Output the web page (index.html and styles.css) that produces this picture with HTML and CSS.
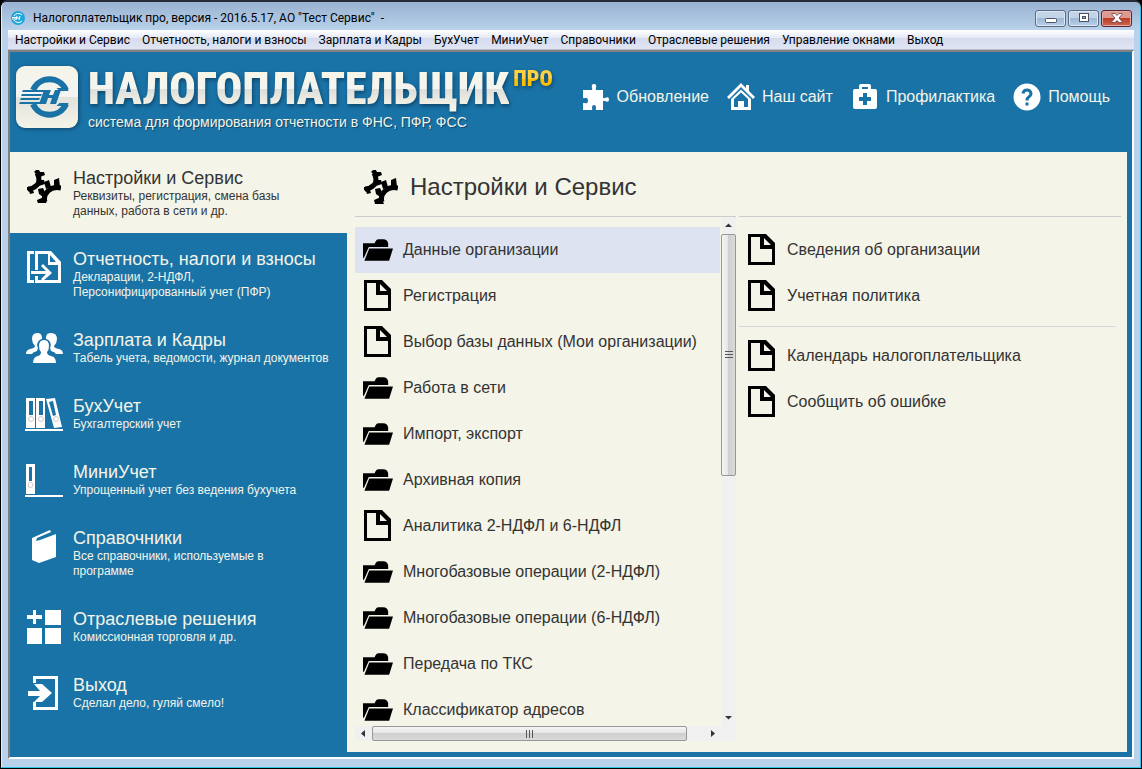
FILE: index.html
```html
<!DOCTYPE html>
<html lang="ru">
<head>
<meta charset="utf-8">
<title>Налогоплательщик про</title>
<link rel="stylesheet" href="styles.css">
</head>
<body>
<svg class="defs" aria-hidden="true">
  <defs>
    <symbol id="tools" viewBox="0 0 34 34">
      <path d="M10 3q4 8 0 12-4 4-9 4" fill="none" stroke="#000" stroke-width="5"/>
      <path d="M7 2l2-2 3 0 1 2 4 0 1 3-5 2zM12 10l5 0 1 4-6 2zM0 17l5 0 2 6-4 1-1-3-2-1z"/>
      <path d="M34 18q-8-2-13 3-5 5-3 11" fill="none" stroke="#000" stroke-width="5"/>
      <path d="M17 12l5-2 2 7-5 2zM27 10l5-2 1 9-6-1zM11 19l5-1 3 6-3 3-4-3zM10 30l7-3 3 7-9 0z"/>
    </symbol>
    <symbol id="folder" viewBox="0 0 32 24">
      <path d="M1 5h12l1-2q1-2 3-2h5q4 0 5 4v4H7L2 20H1z"/>
      <path d="M7.500 10.500H32L28 23H2.500z"/>
    </symbol>
    <symbol id="file" viewBox="0 0 28 32">
      <path fill-rule="evenodd" d="M0 0H18L27 9V31H0zM3 3V28H24V15H12V3zM16 4V11H23z"/>
    </symbol>
  </defs>
</svg>
<div class="window">
  <header class="titlebar">
    <svg class="app-icon" viewBox="0 0 14 14"><circle cx="7" cy="7" r="7" fill="#1ea7dc"/><path d="M11 4a5 5 0 0 0-8 1M11 10a5 5 0 0 1-8-1M1 6.500h5M1 8h4M6 5L5 9M9 5L8 9M6 7h3" fill="none" stroke="#fff"/></svg>
    <h1 class="caption">Налогоплательщик про, версия - 2016.5.17, АО "Тест Сервис"&nbsp; -</h1>
    <div class="controls">
      <button class="control" aria-label="Свернуть"><svg viewBox="0 0 12 12"><rect x=".5" y="6.500" width="11" height="4" rx="1" fill="#fff" stroke="#4b5263"/></svg></button>
      <button class="control" aria-label="Развернуть"><svg viewBox="0 0 12 12"><rect x="1.500" y="1.500" width="9" height="8" fill="#fff" stroke="#4b5263"/><rect x="4.500" y="4.500" width="3" height="2" fill="#8bacd0" stroke="#4b5263"/></svg></button>
      <button class="control close" aria-label="Закрыть"><svg viewBox="0 0 12 12"><path d="M1 1.500h3l2 2 2-2h3v1L8 6l3 3.500v1H8l-2-2-2 2H1v-1L4 6 1 2.500z" fill="#fff" stroke="#5c3c44" stroke-width=".8"/></svg></button>
    </div>
  </header>
  <nav class="menubar">
    <button>Настройки и Сервис</button><button>Отчетность, налоги и взносы</button><button>Зарплата и Кадры</button><button>БухУчет</button><button>МиниУчет</button><button>Справочники</button><button>Отраслевые решения</button><button>Управление окнами</button><button>Выход</button>
  </nav>
  <div class="client">
    <div class="banner">
      <svg class="logo" viewBox="0 0 62 62">
        <defs><linearGradient id="plate" x2="0" y2="1"><stop offset="0" stop-color="#f4f4e8"/><stop offset=".5" stop-color="#f4f4f2"/><stop offset=".5" stop-color="#e2e2dc"/><stop offset="1" stop-color="#f4f4e8"/></linearGradient></defs>
        <rect width="62" height="62" rx="9" fill="url(#plate)"/>
        <g fill="none" stroke="#1a73a7" stroke-width="6">
          <path d="M17 24A18 18 0 0 1 50 24"/>
          <path d="M17 38A18 18 0 0 0 50 38"/>
        </g>
        <g fill="#1a73a7">
          <path d="M52.500 25h-9l-3-3h11zM52.500 37h-9l-3 3h11z"/>
          <path d="M28 24h7l-2 5h4l2-5h6l-5 14h-6l2-6h-4l-2 6h-7z"/>
          <path d="M7 24h22v2H6zM6 28h20l-1 2H5zM5 32h19l-1 2H4zM4 36h20v2H3z"/>
        </g>
      </svg>
      <div class="brand">
        <div class="wordmark"><span class="name">НАЛОГОПЛАТЕЛЬЩИК</span><span class="edition">ПРО</span></div>
        <p class="tagline">система для формирования отчетности в ФНС, ПФР, ФСС</p>
      </div>
      <nav class="quick">
        <a href="#update"><svg viewBox="0 0 28 28"><path d="M1 7h8q2 0 1-2-1-4 2-4t2 4q-1 2 1 2h6v7q0 2 2 1 4-2 4 1.500T23 18q-2-1-2 1v8h-6q-2 0-1-2 0-3-2-3t-2 3q1 2-1 2H1v-6q0-2 2-1 3 1 3-2.500T3 15q-2 1-2-1z"/></svg>Обновление</a>
        <a href="#site"><svg viewBox="0 0 28 28"><path d="M14 0l5 5V2h3v6l6 6-2 2L14 4 2 16l-2-2z"/><path fill-rule="evenodd" d="M14 6.500L24 16v11H4V16zm0 3L7 16V24h4v-6h6v6h4v-8z"/></svg>Наш сайт</a>
        <a href="#care"><svg viewBox="0 0 28 28"><path fill-rule="evenodd" d="M8 6V3q0-2 2-2h8q2 0 2 2v3h4q2 0 2 2v16q0 2-2 2H4q-2 0-2-2V8q0-2 2-2zm3 0h6V4h-6zm1 4v4H8v4h4v4h4v-4h4v-4h-4v-4z"/></svg>Профилактика</a>
        <a href="#help"><svg viewBox="0 0 28 28"><circle cx="14" cy="14" r="13.500"/><path d="M10 10.500Q10.500 7 14 7t4 3.500q0 2-2 3.300-2 1.200-2 3.700M14 19.500v3" fill="none" stroke="#1a73a7" stroke-width="3"/></svg>Помощь</a>
      </nav>
    </div>
    <div class="body">
      <nav class="sidebar">
        <button class="section active"><svg viewBox="0 0 38 35"><use href="#tools" x="2" y="2" width="34" height="34"/></svg><span class="label"><b>Настройки и Сервис</b><span class="short">Реквизиты, регистрация, смена базы данных, работа в сети и др.</span></span></button>
        <button class="section"><svg viewBox="0 0 38 35"><path fill-rule="evenodd" d="M2 2H9V5H5V31H9V34H2zM10 2H26L36 13V34H10V27H13V31H33V16H23V5H13V21H10zM25 6V13H31z"/><path d="M6 22h15l-5-5 2-2 9 9-9 8-2-2 5-5H6z"/></svg><span class="label"><b>Отчетность, налоги и взносы</b><span class="short">Декларации, 2-НДФЛ, Персонифицированный учет (ПФР)</span></span></button>
        <button class="section"><svg viewBox="0 0 38 35"><path d="M12 3c4 0 5 2 5 6-4 1-6 5-4 9l-1 3q-4 1-5 3H1q0-4 4-5 5-1 5-3-3-3-3-7 0-6 5-6zM26 3c-4 0-5 2-5 6 4 1 6 5 4 9l1 3q4 1 5 3h7q0-4-4-5-5-1-5-3 3-3 3-7 0-6-6-6z"/><path d="M19 10q5 0 5 6 0 4-2 6 0 3 4 4 5 1 5 7H8q0-6 5-7 3-1 3-4-2-2-2-6 0-6 5-6z"/></svg><span class="label"><b>Зарплата и Кадры</b><span>Табель учета, ведомости, журнал документов</span></span></button>
        <button class="section"><svg viewBox="0 0 38 35"><path d="M0 33h38v2H0z"/><path fill-rule="evenodd" d="M1 2h9v30H1zM4 5v14h4V5zM11 2h9v30h-9zM14 5v14h4V5zM21 3l9-1 7 29-8 1zM24 6l4 14 3-1-3-14z"/><g fill="none" stroke="#ccc"><circle cx="6" cy="23" r="2.500"/><circle cx="16" cy="23" r="2.500"/><circle cx="31" cy="23" r="2.500"/></g></svg><span class="label"><b>БухУчет</b><span>Бухгалтерский учет</span></span></button>
        <button class="section"><svg viewBox="0 0 38 35"><path d="M0 33h38v2H0z"/><path fill-rule="evenodd" d="M1 2h9v30H1zM4 5v14h3V5z"/><circle cx="5.500" cy="23" r="2.500" fill="none" stroke="#ccc"/></svg><span class="label"><b>МиниУчет</b><span>Упрощенный учет без ведения бухучета</span></span></button>
        <button class="section"><svg viewBox="0 0 38 35"><path d="M7 10L25 2l1 2-14 6-1 3 4-1 16-6v23L14 35l-7-3z"/></svg><span class="label"><b>Справочники</b><span class="short">Все справочники, используемые в программе</span></span></button>
        <button class="section"><svg viewBox="0 0 38 35"><path d="M8 1h3v5h6v4h-6v5H8v-5H2V6h6zM20 1h16v15H20zM2 19h15v16H2zM20 19h16v16H20z"/></svg><span class="label"><b>Отраслевые решения</b><span>Комиссионная торговля и др.</span></span></button>
        <button class="section"><svg viewBox="0 0 38 35"><path d="M8 1h25v34H8v-8h3v5h19V4H11v4H8z"/><path d="M3 16h12l-6-7h8l10 9-10 9H9l6-6H3z"/></svg><span class="label"><b>Выход</b><span>Сделал дело, гуляй смело!</span></span></button>
      </nav>
      <main class="content">
        <h2 class="heading"><svg viewBox="0 0 34 34"><use href="#tools"/></svg>Настройки и Сервис</h2>
        <div class="panes">
          <section class="tree">
            <div class="list">
              <button class="item selected"><svg class="folder" viewBox="0 0 32 24"><use href="#folder"/></svg>Данные организации</button>
              <button class="item"><svg class="file" viewBox="0 0 28 32"><use href="#file"/></svg>Регистрация</button>
              <button class="item"><svg class="file" viewBox="0 0 28 32"><use href="#file"/></svg>Выбор базы данных (Мои организации)</button>
              <button class="item"><svg class="folder" viewBox="0 0 32 24"><use href="#folder"/></svg>Работа в сети</button>
              <button class="item"><svg class="folder" viewBox="0 0 32 24"><use href="#folder"/></svg>Импорт, экспорт</button>
              <button class="item"><svg class="folder" viewBox="0 0 32 24"><use href="#folder"/></svg>Архивная копия</button>
              <button class="item"><svg class="file" viewBox="0 0 28 32"><use href="#file"/></svg>Аналитика 2-НДФЛ и 6-НДФЛ</button>
              <button class="item"><svg class="folder" viewBox="0 0 32 24"><use href="#folder"/></svg>Многобазовые операции (2-НДФЛ)</button>
              <button class="item"><svg class="folder" viewBox="0 0 32 24"><use href="#folder"/></svg>Многобазовые операции (6-НДФЛ)</button>
              <button class="item"><svg class="folder" viewBox="0 0 32 24"><use href="#folder"/></svg>Передача по ТКС</button>
              <button class="item"><svg class="folder" viewBox="0 0 32 24"><use href="#folder"/></svg>Классификатор адресов</button>
            </div>
            <div class="vbar">
              <svg class="arrow" viewBox="0 0 15 17"><path d="M4 10h7L7.500 6.500z"/></svg>
              <div class="track"><div class="thumb"><svg viewBox="0 0 8 8"><path d="M0 0h8v1H0zM0 3h8v1H0zM0 6h8v1H0z"/></svg></div></div>
              <svg class="arrow" viewBox="0 0 15 17"><path d="M4 7h7l-3.500 3.500z"/></svg>
            </div>
            <div class="hbar">
              <svg class="arrow" viewBox="0 0 17 15"><path d="M10 4v7L6 7.500z"/></svg>
              <div class="track"><div class="thumb"><svg viewBox="0 0 8 8"><path d="M0 0h1v8H0zM3 0h1v8H3zM6 0h1v8H6z"/></svg></div></div>
              <svg class="arrow" viewBox="0 0 17 15"><path d="M7 4v7l4-3.500z"/></svg>
            </div>
            <div class="corner"></div>
          </section>
          <section class="links">
            <div class="group">
              <button class="item"><svg class="file" viewBox="0 0 28 32"><use href="#file"/></svg>Сведения об организации</button>
              <button class="item"><svg class="file" viewBox="0 0 28 32"><use href="#file"/></svg>Учетная политика</button>
            </div>
            <div class="group">
              <button class="item"><svg class="file" viewBox="0 0 28 32"><use href="#file"/></svg>Календарь налогоплательщика</button>
              <button class="item"><svg class="file" viewBox="0 0 28 32"><use href="#file"/></svg>Сообщить об ошибке</button>
            </div>
          </section>
        </div>
      </main>
    </div>
  </div>
</div>
</body>
</html>
```
FILE: styles.css
```css
* { box-sizing: border-box; }
body {
  margin: 0;
  background: #000;
  font-family: "Liberation Sans", sans-serif;
  color: #333;
}
button {
  border: 0;
  margin: 0;
  padding: 0;
  background: none;
  color: inherit;
  font-family: inherit;
  text-align: left;
}
h1, h2, p { margin: 0; font-weight: normal; }
svg { flex: none; fill: currentColor; }
.defs { position: absolute; width: 0; height: 0; }

.window {
  display: flex;
  flex-direction: column;
  min-height: 100vh;
  padding: 0 7px 9px;
  border: 1px solid #000;
  border-top: 2px solid #282c38;
  border-radius: 7px 7px 0 0;
  box-shadow: inset -1px -1px #30c8e8, inset 1px 0 #e4effa;
  background: linear-gradient(#98b2d1, #b9d1ea 28px);
}
.titlebar {
  display: flex;
  align-items: center;
  height: 28px;
  padding: 4px 2px 0 3px;
}
.app-icon { width: 14px; height: 14px; margin-right: 8px; }
.caption {
  flex: 1;
  color: #000;
  font: 12px/16px Roboto, "Noto Sans", sans-serif;
}
.controls { display: flex; gap: 2px; }
.control {
  display: flex;
  align-items: center;
  justify-content: center;
  width: 31px;
  height: 17px;
  border: 1px solid #5a6b83;
  border-radius: 3px;
  box-shadow: inset 0 0 0 1px #dce8f4;
  background: linear-gradient(#c3d4e8 50%, #9db8d6 50%, #b9d0e8);
}
.control svg { width: 12px; height: 12px; }
.close {
  border-color: #5a2430;
  box-shadow: inset 0 0 0 1px #e6aaa2;
  background: linear-gradient(#dc9a90 50%, #bc3c28 50%, #cc6850);
}
.menubar {
  display: flex;
  gap: 12px;
  height: 20px;
  padding: 0 7px;
  border-bottom: 1px solid #b6bccc;
  background: linear-gradient(#fff, #e6eaf5 40%, #d5dbed 40%, #e0e5f4);
  color: #000;
}
.menubar button {
  font: 12px/20px Roboto, "Noto Sans", sans-serif;
  white-space: nowrap;
}
.client {
  flex: 1;
  display: flex;
  flex-direction: column;
  padding: 0 5px 5px 0;
  border: 2px solid #fff;
  border-top-color: #808080;
  border-left-color: #808080;
  background: #1a73a7;
}
.banner {
  display: flex;
  align-items: flex-start;
  height: 100px;
  padding: 14px 17px 0 6px;
  color: #f4f4e8;
}
.logo {
  width: 62px;
  height: 62px;
  margin-right: 10px;
  filter: drop-shadow(1px 1px 2px #0c4468);
}
.brand { flex: 1; white-space: nowrap; }
.wordmark { display: flex; align-items: flex-start; height: 46px; }
.name, .edition {
  font-family: "Liberation Sans Narrow", "Roboto Condensed", "DejaVu Sans Condensed", sans-serif;
  font-weight: 900;
  -webkit-background-clip: text;
  background-clip: text;
  color: transparent;
  filter: drop-shadow(1px 2px 2px #0c4468);
}
.name {
  font-size: 44px;
  line-height: 46px;
  background-image: linear-gradient(#f6f6e6 10%, #f4f4f2 50%, #dededa 50%, #f4f4e8 90%);
}
.edition {
  margin-left: 4px;
  font-size: 22px;
  line-height: 26px;
  background-image: linear-gradient(#ffd040 50%, #ffbe00 50%);
}
.tagline {
  font-size: 14px;
  line-height: 20px;
  text-shadow: 1px 1px 1px #0c4468;
}
.quick { display: flex; gap: 18px; padding-top: 17px; }
.quick a {
  display: flex;
  align-items: center;
  gap: 7px;
  color: #f4f4e8;
  font-size: 16px;
  line-height: 28px;
  text-decoration: none;
  white-space: nowrap;
}
.quick svg { width: 28px; height: 28px; fill: #fff; }

.body { flex: 1; display: flex; }
.sidebar { flex: 0 0 337px; }
.section {
  display: flex;
  align-items: flex-start;
  width: 100%;
  padding: 16px 12px 14px 15px;
  gap: 10px;
  color: #f4f4e8;
}
.section > svg { width: 38px; height: 35px; fill: #fff; }
.section.active { background: #f4f4e8; color: #333; }
.section.active > svg { fill: #000; }
.label { flex: 1; }
.label b {
  display: block;
  margin-bottom: 1px;
  font-size: 18px;
  font-weight: normal;
  line-height: 20px;
  white-space: nowrap;
}
.label span {
  display: block;
  font-size: 12px;
  line-height: 15px;
}
.label .short { max-width: 220px; }

.content {
  flex: 1;
  display: flex;
  flex-direction: column;
  padding: 0 6px 11px 8px;
  background: #f4f4e8;
}
.heading {
  display: flex;
  align-items: center;
  gap: 12px;
  height: 64px;
  padding: 6px 9px 0;
  font-size: 24px;
}
.heading svg { width: 34px; height: 34px; fill: #000; }
.panes { flex: 1; display: grid; grid-template-columns: 381px 1fr; gap: 3px; }
.tree {
  display: grid;
  grid-template-columns: 1fr 15px;
  grid-template-rows: 1fr 15px;
  border-top: 1px solid #ccc;
}
.list { height: 509px; padding: 10px 1px 0 0; overflow: hidden; }
.item {
  display: flex;
  align-items: center;
  width: 100%;
  height: 46px;
  padding-left: 7px;
  gap: 10px;
  font-size: 16px;
  white-space: nowrap;
}
.item.selected { background: #dde3f0; }
.item svg { fill: #000; }
.folder { width: 31px; height: 24px; }
.file { width: 28px; height: 32px; margin: 0 1px 0 2px; }
.vbar { display: flex; flex-direction: column; background: #f0f0f0; }
.hbar { display: flex; background: #f0f0f0; }
.corner { background: #f0f0f0; }
.vbar .arrow { width: 15px; height: 17px; fill: #333; }
.hbar .arrow { width: 17px; height: 15px; fill: #333; }
.track { flex: 1; }
.thumb {
  display: flex;
  align-items: center;
  justify-content: center;
  border: 1px solid #979797;
  border-radius: 2px;
}
.thumb svg { width: 8px; height: 8px; fill: #555; }
.vbar .thumb { height: 51%; background: linear-gradient(90deg, #f5f5f5, #e6e6e6 45%, #cfcfcf 50%, #dadada); }
.hbar .thumb { width: 95%; height: 15px; background: linear-gradient(#f5f5f5, #e6e6e6 45%, #cfcfcf 50%, #dadada); }
.links { border-top: 1px solid #ccc; }
.group { margin-right: 5px; padding: 10px 0 7px; }
.group + .group { border-top: 1px solid #d8d8d8; padding-top: 6px; }
```
